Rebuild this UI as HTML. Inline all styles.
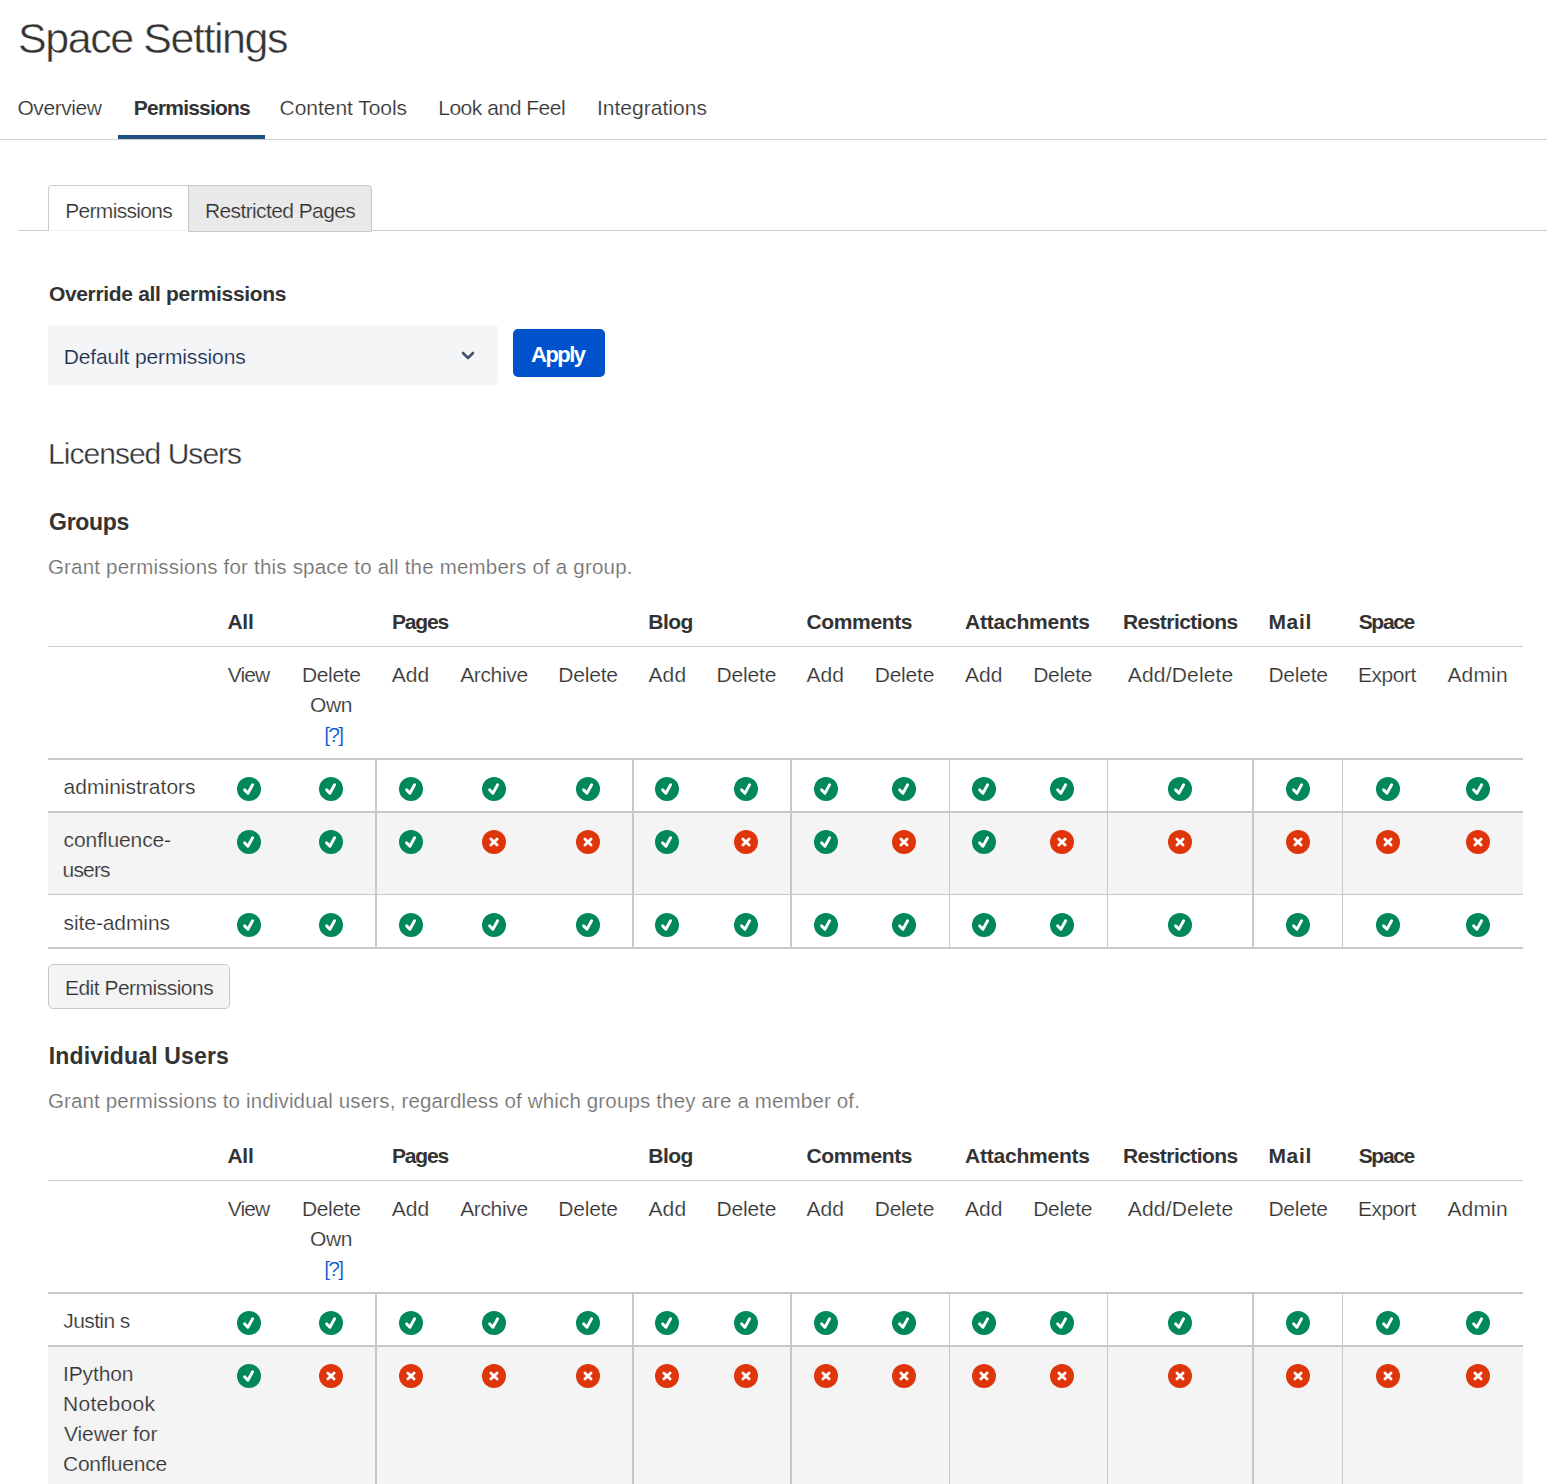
<!DOCTYPE html>
<html><head><meta charset="utf-8"><title>Space Settings</title>
<style>
html,body{margin:0;padding:0;background:#fff;}
body{width:1547px;height:1484px;overflow:hidden;position:relative;font-family:"Liberation Sans", sans-serif;color:#333333;}
body>div,body>span,body>svg{position:absolute;box-sizing:content-box;}
body>span{white-space:nowrap;}
</style></head><body>
<svg width="0" height="0" style="position:absolute"><defs>
<symbol id="ok" viewBox="0 0 24 24"><circle cx="12" cy="12" r="12" fill="#00875a"/><path d="M7.6 12.9 L10.9 16.2 L15.6 7.8" fill="none" stroke="#fff" stroke-width="2.9" stroke-linecap="round" stroke-linejoin="round"/></symbol>
<symbol id="no" viewBox="0 0 24 24"><circle cx="12" cy="12" r="12" fill="#de350b"/><path d="M8.9 8.9 L15.1 15.1 M15.1 8.9 L8.9 15.1" fill="none" stroke="#fff" stroke-width="2.8" stroke-linecap="round"/></symbol>
</defs></svg>
<div style="left:0px;top:139px;width:1547px;height:1px;background:#cfcfcf;"></div>
<div style="left:118px;top:135px;width:147px;height:4px;background:#205081;"></div>
<div style="left:18px;top:230px;width:1529px;height:1px;background:#cccccc;"></div>
<div style="left:48px;top:185px;width:139px;height:45px;background:#fff;border:1px solid #cccccc;border-bottom:none;border-radius:4px 0 0 0"></div>
<div style="left:188px;top:185px;width:182px;height:45px;background:#e9e9e9;border:1px solid #c8c8c8;border-radius:0 4px 0 0"></div>
<div style="left:49px;top:230px;width:139px;height:1px;background:#f0f0f0;"></div>
<div style="left:48px;top:325px;width:450px;height:60px;background:#f4f5f7;border-radius:4px"></div>
<svg style="position:absolute;left:458px;top:346px" width="20" height="20" viewBox="0 0 20 20"><path d="M5 7 L10 12 L15 7" fill="none" stroke="#42526e" stroke-width="2.6" stroke-linecap="round" stroke-linejoin="round"/></svg>
<div style="left:513px;top:329px;width:92px;height:48px;background:#0052cc;border-radius:5px"></div>
<div style="left:48px;top:646px;width:1475px;height:1px;background:#cccccc;"></div>
<div style="left:48px;top:758px;width:1475px;height:2px;background:#c8c8c8;"></div>
<div style="left:48px;top:811px;width:1475px;height:2px;background:#c8c8c8;"></div>
<div style="left:48px;top:813px;width:1475px;height:81px;background:#f4f4f4;"></div>
<div style="left:48px;top:894px;width:1475px;height:1px;background:#c8c8c8;"></div>
<div style="left:48px;top:947px;width:1475px;height:2px;background:#c8c8c8;"></div>
<div style="left:375px;top:760px;width:2px;height:187px;background:#c8c8c8;"></div>
<div style="left:632px;top:760px;width:2px;height:187px;background:#c8c8c8;"></div>
<div style="left:790px;top:760px;width:2px;height:187px;background:#c8c8c8;"></div>
<div style="left:949px;top:760px;width:1px;height:187px;background:#c8c8c8;"></div>
<div style="left:1107px;top:760px;width:1px;height:187px;background:#c8c8c8;"></div>
<div style="left:1252px;top:760px;width:2px;height:187px;background:#c8c8c8;"></div>
<div style="left:1342px;top:760px;width:1px;height:187px;background:#c8c8c8;"></div>
<div style="left:48px;top:964px;width:180px;height:43px;background:#f4f4f4;border:1px solid #c8c8c8;border-radius:5px"></div>
<div style="left:48px;top:1180px;width:1475px;height:1px;background:#cccccc;"></div>
<div style="left:48px;top:1292px;width:1475px;height:2px;background:#c8c8c8;"></div>
<div style="left:48px;top:1345px;width:1475px;height:2px;background:#c8c8c8;"></div>
<div style="left:48px;top:1347px;width:1475px;height:140px;background:#f4f4f4;"></div>
<div style="left:375px;top:1294px;width:2px;height:200px;background:#c8c8c8;"></div>
<div style="left:632px;top:1294px;width:2px;height:200px;background:#c8c8c8;"></div>
<div style="left:790px;top:1294px;width:2px;height:200px;background:#c8c8c8;"></div>
<div style="left:949px;top:1294px;width:1px;height:200px;background:#c8c8c8;"></div>
<div style="left:1107px;top:1294px;width:1px;height:200px;background:#c8c8c8;"></div>
<div style="left:1252px;top:1294px;width:2px;height:200px;background:#c8c8c8;"></div>
<div style="left:1342px;top:1294px;width:1px;height:200px;background:#c8c8c8;"></div>
<span style="left:18.00px;top:5.50px;font-size:43px;line-height:64px;letter-spacing:-1.442px;-webkit-text-stroke:0.5px #fff;">Space Settings</span>
<span style="left:17.40px;top:92.00px;font-size:21px;line-height:32px;letter-spacing:-0.422px;-webkit-text-stroke:0.2px #fff;">Overview</span>
<span style="left:133.80px;top:92.00px;font-size:21px;line-height:32px;font-weight:bold;letter-spacing:-0.791px;">Permissions</span>
<span style="left:279.60px;top:92.00px;font-size:21px;line-height:32px;letter-spacing:-0.042px;-webkit-text-stroke:0.2px #fff;">Content Tools</span>
<span style="left:438.20px;top:92.00px;font-size:21px;line-height:32px;letter-spacing:-0.469px;-webkit-text-stroke:0.2px #fff;">Look and Feel</span>
<span style="left:596.90px;top:92.00px;font-size:21px;line-height:32px;letter-spacing:0.033px;-webkit-text-stroke:0.2px #fff;">Integrations</span>
<span style="left:65.20px;top:195.00px;font-size:21px;line-height:32px;letter-spacing:-0.676px;-webkit-text-stroke:0.2px #fff;">Permissions</span>
<span style="left:204.90px;top:195.00px;font-size:21px;line-height:32px;letter-spacing:-0.601px;-webkit-text-stroke:0.2px #e9e9e9;">Restricted Pages</span>
<span style="left:48.90px;top:278.00px;font-size:21px;line-height:32px;font-weight:bold;letter-spacing:-0.327px;">Override all permissions</span>
<span style="left:63.70px;top:341.00px;font-size:21px;line-height:32px;color:#172b4d;letter-spacing:-0.134px;-webkit-text-stroke:0.2px #f4f5f7;">Default permissions</span>
<span style="left:531.10px;top:338.00px;font-size:22px;line-height:33px;font-weight:bold;color:#ffffff;letter-spacing:-1.544px;">Apply</span>
<span style="left:48.10px;top:431.00px;font-size:30px;line-height:45px;letter-spacing:-0.982px;-webkit-text-stroke:0.35px #fff;">Licensed Users</span>
<span style="left:49.10px;top:504.60px;font-size:23px;line-height:34px;font-weight:bold;letter-spacing:-0.318px;">Groups</span>
<span style="left:47.90px;top:550.60px;font-size:20.5px;line-height:31px;color:#707070;letter-spacing:0.204px;-webkit-text-stroke:0.2px #fff;">Grant permissions for this space to all the members of a group.</span>
<span style="left:227.40px;top:606.00px;font-size:21px;line-height:32px;font-weight:bold;letter-spacing:-0.250px;">All</span>
<span style="left:391.90px;top:606.00px;font-size:21px;line-height:32px;font-weight:bold;letter-spacing:-1.173px;">Pages</span>
<span style="left:648.20px;top:606.00px;font-size:21px;line-height:32px;font-weight:bold;letter-spacing:-0.476px;">Blog</span>
<span style="left:806.50px;top:606.00px;font-size:21px;line-height:32px;font-weight:bold;letter-spacing:-0.363px;">Comments</span>
<span style="left:965.00px;top:606.00px;font-size:21px;line-height:32px;font-weight:bold;letter-spacing:-0.221px;">Attachments</span>
<span style="left:1123.00px;top:606.00px;font-size:21px;line-height:32px;font-weight:bold;letter-spacing:-0.553px;">Restrictions</span>
<span style="left:1268.40px;top:606.00px;font-size:21px;line-height:32px;font-weight:bold;letter-spacing:0.698px;">Mail</span>
<span style="left:1358.70px;top:606.00px;font-size:21px;line-height:32px;font-weight:bold;letter-spacing:-1.323px;">Space</span>
<span style="left:227.80px;top:659.00px;font-size:21px;line-height:32px;letter-spacing:-0.891px;-webkit-text-stroke:0.2px #fff;">View</span>
<span style="left:301.90px;top:659.00px;font-size:21px;line-height:32px;letter-spacing:-0.325px;-webkit-text-stroke:0.2px #fff;">Delete</span>
<span style="left:391.80px;top:659.00px;font-size:21px;line-height:32px;letter-spacing:0.007px;-webkit-text-stroke:0.2px #fff;">Add</span>
<span style="left:460.20px;top:659.00px;font-size:21px;line-height:32px;letter-spacing:-0.357px;-webkit-text-stroke:0.2px #fff;">Archive</span>
<span style="left:558.30px;top:659.00px;font-size:21px;line-height:32px;letter-spacing:-0.205px;-webkit-text-stroke:0.2px #fff;">Delete</span>
<span style="left:648.40px;top:659.00px;font-size:21px;line-height:32px;letter-spacing:0.157px;-webkit-text-stroke:0.2px #fff;">Add</span>
<span style="left:716.40px;top:659.00px;font-size:21px;line-height:32px;letter-spacing:-0.145px;-webkit-text-stroke:0.2px #fff;">Delete</span>
<span style="left:806.50px;top:659.00px;font-size:21px;line-height:32px;letter-spacing:0.057px;-webkit-text-stroke:0.2px #fff;">Add</span>
<span style="left:874.70px;top:659.00px;font-size:21px;line-height:32px;letter-spacing:-0.205px;-webkit-text-stroke:0.2px #fff;">Delete</span>
<span style="left:965.00px;top:659.00px;font-size:21px;line-height:32px;letter-spacing:0.007px;-webkit-text-stroke:0.2px #fff;">Add</span>
<span style="left:1033.20px;top:659.00px;font-size:21px;line-height:32px;letter-spacing:-0.305px;-webkit-text-stroke:0.2px #fff;">Delete</span>
<span style="left:1127.80px;top:659.00px;font-size:21px;line-height:32px;letter-spacing:0.175px;-webkit-text-stroke:0.2px #fff;">Add/Delete</span>
<span style="left:1268.40px;top:659.00px;font-size:21px;line-height:32px;letter-spacing:-0.225px;-webkit-text-stroke:0.2px #fff;">Delete</span>
<span style="left:1358.00px;top:659.00px;font-size:21px;line-height:32px;letter-spacing:-0.452px;-webkit-text-stroke:0.2px #fff;">Export</span>
<span style="left:1447.40px;top:659.00px;font-size:21px;line-height:32px;letter-spacing:0.164px;-webkit-text-stroke:0.2px #fff;">Admin</span>
<span style="left:310.00px;top:689.00px;font-size:21px;line-height:32px;letter-spacing:-0.400px;-webkit-text-stroke:0.2px #fff;">Own</span>
<span style="left:324.30px;top:719.00px;font-size:21px;line-height:32px;color:#0052cc;letter-spacing:-1.807px;-webkit-text-stroke:0.2px #fff;">[?]</span>
<span style="left:63.60px;top:771.00px;font-size:21px;line-height:32px;letter-spacing:0.010px;-webkit-text-stroke:0.2px #fff;">administrators</span>
<span style="left:63.60px;top:824.00px;font-size:21px;line-height:32px;letter-spacing:-0.108px;-webkit-text-stroke:0.2px #f4f4f4;">confluence-</span>
<span style="left:62.60px;top:854.00px;font-size:21px;line-height:32px;letter-spacing:-0.838px;-webkit-text-stroke:0.2px #f4f4f4;">users</span>
<span style="left:63.60px;top:907.00px;font-size:21px;line-height:32px;letter-spacing:-0.097px;-webkit-text-stroke:0.2px #fff;">site-admins</span>
<span style="left:64.90px;top:972.00px;font-size:21px;line-height:32px;letter-spacing:-0.505px;-webkit-text-stroke:0.2px #f4f4f4;">Edit Permissions</span>
<span style="left:48.70px;top:1038.60px;font-size:23px;line-height:34px;font-weight:bold;letter-spacing:0.168px;">Individual Users</span>
<span style="left:47.90px;top:1084.60px;font-size:20.5px;line-height:31px;color:#707070;letter-spacing:0.154px;-webkit-text-stroke:0.2px #fff;">Grant permissions to individual users, regardless of which groups they are a member of.</span>
<span style="left:227.40px;top:1140.00px;font-size:21px;line-height:32px;font-weight:bold;letter-spacing:-0.250px;">All</span>
<span style="left:391.90px;top:1140.00px;font-size:21px;line-height:32px;font-weight:bold;letter-spacing:-1.173px;">Pages</span>
<span style="left:648.20px;top:1140.00px;font-size:21px;line-height:32px;font-weight:bold;letter-spacing:-0.476px;">Blog</span>
<span style="left:806.50px;top:1140.00px;font-size:21px;line-height:32px;font-weight:bold;letter-spacing:-0.363px;">Comments</span>
<span style="left:965.00px;top:1140.00px;font-size:21px;line-height:32px;font-weight:bold;letter-spacing:-0.221px;">Attachments</span>
<span style="left:1123.00px;top:1140.00px;font-size:21px;line-height:32px;font-weight:bold;letter-spacing:-0.553px;">Restrictions</span>
<span style="left:1268.40px;top:1140.00px;font-size:21px;line-height:32px;font-weight:bold;letter-spacing:0.698px;">Mail</span>
<span style="left:1358.70px;top:1140.00px;font-size:21px;line-height:32px;font-weight:bold;letter-spacing:-1.323px;">Space</span>
<span style="left:227.80px;top:1193.00px;font-size:21px;line-height:32px;letter-spacing:-0.891px;-webkit-text-stroke:0.2px #fff;">View</span>
<span style="left:301.90px;top:1193.00px;font-size:21px;line-height:32px;letter-spacing:-0.325px;-webkit-text-stroke:0.2px #fff;">Delete</span>
<span style="left:391.80px;top:1193.00px;font-size:21px;line-height:32px;letter-spacing:0.007px;-webkit-text-stroke:0.2px #fff;">Add</span>
<span style="left:460.20px;top:1193.00px;font-size:21px;line-height:32px;letter-spacing:-0.357px;-webkit-text-stroke:0.2px #fff;">Archive</span>
<span style="left:558.30px;top:1193.00px;font-size:21px;line-height:32px;letter-spacing:-0.205px;-webkit-text-stroke:0.2px #fff;">Delete</span>
<span style="left:648.40px;top:1193.00px;font-size:21px;line-height:32px;letter-spacing:0.157px;-webkit-text-stroke:0.2px #fff;">Add</span>
<span style="left:716.40px;top:1193.00px;font-size:21px;line-height:32px;letter-spacing:-0.145px;-webkit-text-stroke:0.2px #fff;">Delete</span>
<span style="left:806.50px;top:1193.00px;font-size:21px;line-height:32px;letter-spacing:0.057px;-webkit-text-stroke:0.2px #fff;">Add</span>
<span style="left:874.70px;top:1193.00px;font-size:21px;line-height:32px;letter-spacing:-0.205px;-webkit-text-stroke:0.2px #fff;">Delete</span>
<span style="left:965.00px;top:1193.00px;font-size:21px;line-height:32px;letter-spacing:0.007px;-webkit-text-stroke:0.2px #fff;">Add</span>
<span style="left:1033.20px;top:1193.00px;font-size:21px;line-height:32px;letter-spacing:-0.305px;-webkit-text-stroke:0.2px #fff;">Delete</span>
<span style="left:1127.80px;top:1193.00px;font-size:21px;line-height:32px;letter-spacing:0.175px;-webkit-text-stroke:0.2px #fff;">Add/Delete</span>
<span style="left:1268.40px;top:1193.00px;font-size:21px;line-height:32px;letter-spacing:-0.225px;-webkit-text-stroke:0.2px #fff;">Delete</span>
<span style="left:1358.00px;top:1193.00px;font-size:21px;line-height:32px;letter-spacing:-0.452px;-webkit-text-stroke:0.2px #fff;">Export</span>
<span style="left:1447.40px;top:1193.00px;font-size:21px;line-height:32px;letter-spacing:0.164px;-webkit-text-stroke:0.2px #fff;">Admin</span>
<span style="left:310.00px;top:1223.00px;font-size:21px;line-height:32px;letter-spacing:-0.400px;-webkit-text-stroke:0.2px #fff;">Own</span>
<span style="left:324.30px;top:1253.00px;font-size:21px;line-height:32px;color:#0052cc;letter-spacing:-1.807px;-webkit-text-stroke:0.2px #fff;">[?]</span>
<span style="left:63.30px;top:1305.00px;font-size:21px;line-height:32px;letter-spacing:-0.613px;-webkit-text-stroke:0.2px #fff;">Justin s</span>
<span style="left:63.00px;top:1357.50px;font-size:21px;line-height:32px;letter-spacing:-0.122px;-webkit-text-stroke:0.2px #f4f4f4;">IPython</span>
<span style="left:63.00px;top:1387.50px;font-size:21px;line-height:32px;letter-spacing:0.315px;-webkit-text-stroke:0.2px #f4f4f4;">Notebook</span>
<span style="left:64.00px;top:1417.50px;font-size:21px;line-height:32px;letter-spacing:-0.084px;-webkit-text-stroke:0.2px #f4f4f4;">Viewer for</span>
<span style="left:63.00px;top:1447.50px;font-size:21px;line-height:32px;letter-spacing:-0.240px;-webkit-text-stroke:0.2px #f4f4f4;">Confluence</span>
<svg style="left:237.0px;top:777.0px" width="24" height="24"><use href="#ok"/></svg>
<svg style="left:319.0px;top:777.0px" width="24" height="24"><use href="#ok"/></svg>
<svg style="left:398.8px;top:777.0px" width="24" height="24"><use href="#ok"/></svg>
<svg style="left:482.0px;top:777.0px" width="24" height="24"><use href="#ok"/></svg>
<svg style="left:576.0px;top:777.0px" width="24" height="24"><use href="#ok"/></svg>
<svg style="left:655.0px;top:777.0px" width="24" height="24"><use href="#ok"/></svg>
<svg style="left:734.0px;top:777.0px" width="24" height="24"><use href="#ok"/></svg>
<svg style="left:814.0px;top:777.0px" width="24" height="24"><use href="#ok"/></svg>
<svg style="left:892.0px;top:777.0px" width="24" height="24"><use href="#ok"/></svg>
<svg style="left:972.0px;top:777.0px" width="24" height="24"><use href="#ok"/></svg>
<svg style="left:1050.0px;top:777.0px" width="24" height="24"><use href="#ok"/></svg>
<svg style="left:1168.0px;top:777.0px" width="24" height="24"><use href="#ok"/></svg>
<svg style="left:1286.0px;top:777.0px" width="24" height="24"><use href="#ok"/></svg>
<svg style="left:1376.0px;top:777.0px" width="24" height="24"><use href="#ok"/></svg>
<svg style="left:1466.0px;top:777.0px" width="24" height="24"><use href="#ok"/></svg>
<svg style="left:237.0px;top:830.0px" width="24" height="24"><use href="#ok"/></svg>
<svg style="left:319.0px;top:830.0px" width="24" height="24"><use href="#ok"/></svg>
<svg style="left:398.8px;top:830.0px" width="24" height="24"><use href="#ok"/></svg>
<svg style="left:482.0px;top:830.0px" width="24" height="24"><use href="#no"/></svg>
<svg style="left:576.0px;top:830.0px" width="24" height="24"><use href="#no"/></svg>
<svg style="left:655.0px;top:830.0px" width="24" height="24"><use href="#ok"/></svg>
<svg style="left:734.0px;top:830.0px" width="24" height="24"><use href="#no"/></svg>
<svg style="left:814.0px;top:830.0px" width="24" height="24"><use href="#ok"/></svg>
<svg style="left:892.0px;top:830.0px" width="24" height="24"><use href="#no"/></svg>
<svg style="left:972.0px;top:830.0px" width="24" height="24"><use href="#ok"/></svg>
<svg style="left:1050.0px;top:830.0px" width="24" height="24"><use href="#no"/></svg>
<svg style="left:1168.0px;top:830.0px" width="24" height="24"><use href="#no"/></svg>
<svg style="left:1286.0px;top:830.0px" width="24" height="24"><use href="#no"/></svg>
<svg style="left:1376.0px;top:830.0px" width="24" height="24"><use href="#no"/></svg>
<svg style="left:1466.0px;top:830.0px" width="24" height="24"><use href="#no"/></svg>
<svg style="left:237.0px;top:913.0px" width="24" height="24"><use href="#ok"/></svg>
<svg style="left:319.0px;top:913.0px" width="24" height="24"><use href="#ok"/></svg>
<svg style="left:398.8px;top:913.0px" width="24" height="24"><use href="#ok"/></svg>
<svg style="left:482.0px;top:913.0px" width="24" height="24"><use href="#ok"/></svg>
<svg style="left:576.0px;top:913.0px" width="24" height="24"><use href="#ok"/></svg>
<svg style="left:655.0px;top:913.0px" width="24" height="24"><use href="#ok"/></svg>
<svg style="left:734.0px;top:913.0px" width="24" height="24"><use href="#ok"/></svg>
<svg style="left:814.0px;top:913.0px" width="24" height="24"><use href="#ok"/></svg>
<svg style="left:892.0px;top:913.0px" width="24" height="24"><use href="#ok"/></svg>
<svg style="left:972.0px;top:913.0px" width="24" height="24"><use href="#ok"/></svg>
<svg style="left:1050.0px;top:913.0px" width="24" height="24"><use href="#ok"/></svg>
<svg style="left:1168.0px;top:913.0px" width="24" height="24"><use href="#ok"/></svg>
<svg style="left:1286.0px;top:913.0px" width="24" height="24"><use href="#ok"/></svg>
<svg style="left:1376.0px;top:913.0px" width="24" height="24"><use href="#ok"/></svg>
<svg style="left:1466.0px;top:913.0px" width="24" height="24"><use href="#ok"/></svg>
<svg style="left:237.0px;top:1311.0px" width="24" height="24"><use href="#ok"/></svg>
<svg style="left:319.0px;top:1311.0px" width="24" height="24"><use href="#ok"/></svg>
<svg style="left:398.8px;top:1311.0px" width="24" height="24"><use href="#ok"/></svg>
<svg style="left:482.0px;top:1311.0px" width="24" height="24"><use href="#ok"/></svg>
<svg style="left:576.0px;top:1311.0px" width="24" height="24"><use href="#ok"/></svg>
<svg style="left:655.0px;top:1311.0px" width="24" height="24"><use href="#ok"/></svg>
<svg style="left:734.0px;top:1311.0px" width="24" height="24"><use href="#ok"/></svg>
<svg style="left:814.0px;top:1311.0px" width="24" height="24"><use href="#ok"/></svg>
<svg style="left:892.0px;top:1311.0px" width="24" height="24"><use href="#ok"/></svg>
<svg style="left:972.0px;top:1311.0px" width="24" height="24"><use href="#ok"/></svg>
<svg style="left:1050.0px;top:1311.0px" width="24" height="24"><use href="#ok"/></svg>
<svg style="left:1168.0px;top:1311.0px" width="24" height="24"><use href="#ok"/></svg>
<svg style="left:1286.0px;top:1311.0px" width="24" height="24"><use href="#ok"/></svg>
<svg style="left:1376.0px;top:1311.0px" width="24" height="24"><use href="#ok"/></svg>
<svg style="left:1466.0px;top:1311.0px" width="24" height="24"><use href="#ok"/></svg>
<svg style="left:237.0px;top:1364.0px" width="24" height="24"><use href="#ok"/></svg>
<svg style="left:319.0px;top:1364.0px" width="24" height="24"><use href="#no"/></svg>
<svg style="left:398.8px;top:1364.0px" width="24" height="24"><use href="#no"/></svg>
<svg style="left:482.0px;top:1364.0px" width="24" height="24"><use href="#no"/></svg>
<svg style="left:576.0px;top:1364.0px" width="24" height="24"><use href="#no"/></svg>
<svg style="left:655.0px;top:1364.0px" width="24" height="24"><use href="#no"/></svg>
<svg style="left:734.0px;top:1364.0px" width="24" height="24"><use href="#no"/></svg>
<svg style="left:814.0px;top:1364.0px" width="24" height="24"><use href="#no"/></svg>
<svg style="left:892.0px;top:1364.0px" width="24" height="24"><use href="#no"/></svg>
<svg style="left:972.0px;top:1364.0px" width="24" height="24"><use href="#no"/></svg>
<svg style="left:1050.0px;top:1364.0px" width="24" height="24"><use href="#no"/></svg>
<svg style="left:1168.0px;top:1364.0px" width="24" height="24"><use href="#no"/></svg>
<svg style="left:1286.0px;top:1364.0px" width="24" height="24"><use href="#no"/></svg>
<svg style="left:1376.0px;top:1364.0px" width="24" height="24"><use href="#no"/></svg>
<svg style="left:1466.0px;top:1364.0px" width="24" height="24"><use href="#no"/></svg>
</body></html>
